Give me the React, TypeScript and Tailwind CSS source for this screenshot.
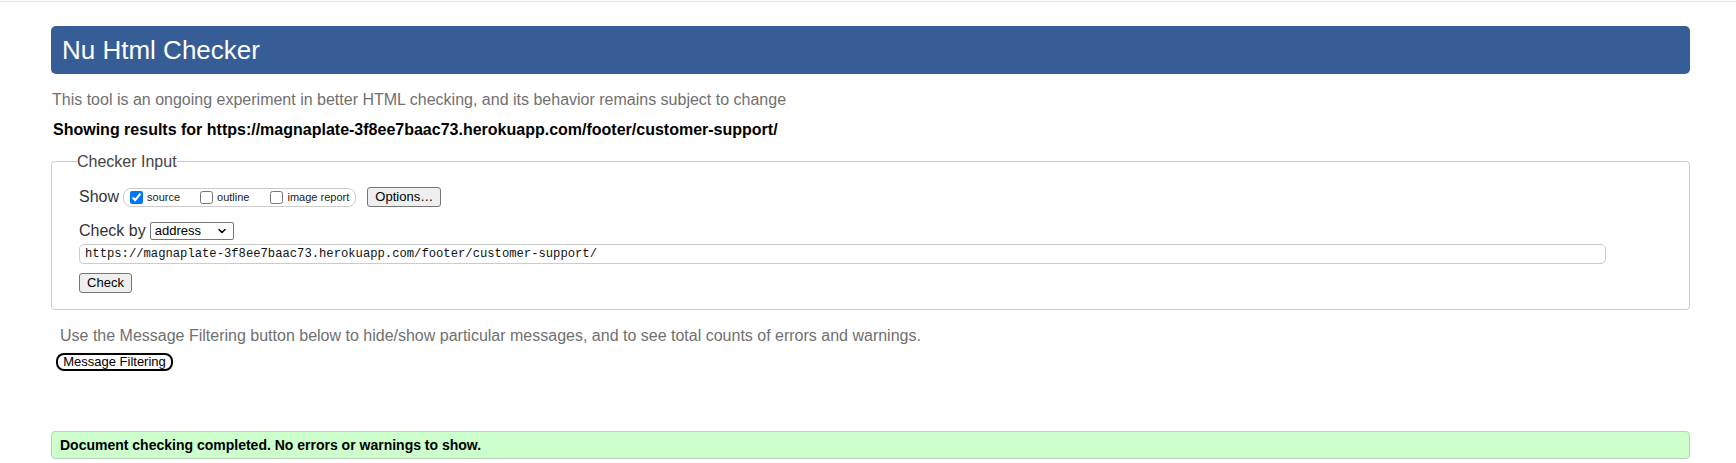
import { ChevronDown } from "lucide-react";

const url = "https://magnaplate-3f8ee7baac73.herokuapp.com/footer/customer-support/";

const ShowOption = ({ label, checked = false, gap = "ml-0" }: { label: string; checked?: boolean; gap?: string }) => (
  <label className={`flex items-center ${gap}`}>
    <input
      type="checkbox"
      defaultChecked={checked}
      className="m-0 h-[13px] w-[13px] accent-[#0075ff]"
    />
    <span className="ml-[4px] text-[11px] leading-[13px] text-[#222]">{label}</span>
  </label>
);

const GrayButton = ({ children, className = "" }: { children: React.ReactNode; className?: string }) => (
  <button
    type="button"
    className={`block h-[20px] rounded-[3px] border border-[#767676] bg-[#efefef] text-[13px] leading-[18px] text-black ${className}`}
  >
    {children}
  </button>
);

const App = () => {
  return (
    <div className="min-h-[463px] w-[1736px] bg-white font-['Liberation_Sans',Arial,sans-serif]">
      <div className="pt-px">
        <div className="h-px w-full bg-[#e4e4e4]" />
      </div>

      <div className="ml-[51px] w-[1639px]">
        {/* header */}
        <div className="mt-[24px] flex h-[48px] items-center rounded-[5px] bg-[#365d95] pl-[11px]">
          <h1 className="text-[26px] font-normal leading-[30px] text-white">Nu Html Checker</h1>
        </div>

        <p className="mt-[17px] pl-px text-[16px] leading-[18px] text-[#707070]">
          This tool is an ongoing experiment in better HTML checking, and its behavior remains subject to change
        </p>
        <p className="mt-[12px] pl-[2px] text-[16px] font-bold leading-[18px] text-black">
          Showing results for {url}
        </p>

        {/* checker input */}
        <fieldset className="mt-[14px] rounded-[4px] border border-[#cccccc] pb-[16px] pl-[27px]">
          <legend className="-ml-[2px] text-[16px] leading-[17px] text-[#444]">Checker Input</legend>

          <div className="mt-[17px] flex h-[20px] items-center">
            <span className="text-[16px] leading-[18px] text-[#333]">Show</span>
            <div className="ml-[4px] flex h-[19px] items-center rounded-[8px] border border-[#cccccc] pl-[6px] pr-[6px]">
              <ShowOption label="source" checked />
              <ShowOption label="outline" gap="ml-[20px]" />
              <ShowOption label="image report" gap="ml-[21px]" />
            </div>
            <GrayButton className="ml-[11px] w-[74px]">Options…</GrayButton>
          </div>

          <div className="mt-[15px] flex h-[18px] items-center">
            <span className="text-[16px] leading-[18px] text-[#333]">Check by</span>
            <div className="relative ml-[4px] flex">
              <select className="block h-[18px] w-[84px] appearance-none rounded-[2px] border border-[#767676] bg-white pl-[4px] text-[13px] leading-[16px] text-black">
                <option>address</option>
                <option>file upload</option>
                <option>text input</option>
              </select>
              <ChevronDown className="pointer-events-none absolute right-[6px] top-[3px] h-[12px] w-[12px] text-black" strokeWidth={3} />
            </div>
          </div>

          <input
            type="text"
            readOnly
            value={url}
            className="mt-[4px] block h-[20px] w-[1527px] rounded-[5px] border border-[#cccccc] px-[5px] font-['Liberation_Mono','Courier_New',monospace] text-[12.2px] leading-[18px] text-[#111]"
          />

          <div className="mt-[9px] flex">
            <GrayButton className="w-[53px]">Check</GrayButton>
          </div>
        </fieldset>

        <p className="mt-[17px] pl-[9px] text-[16px] leading-[18px] text-[#707070]">
          Use the Message Filtering button below to hide/show particular messages, and to see total counts of errors and warnings.
        </p>
        <div className="mt-[8px] flex pl-[5px]">
          <button
            type="button"
            className="block h-[18px] w-[117px] rounded-[8px] border-2 border-black bg-white text-[13px] leading-[14px] text-black"
          >
            Message Filtering
          </button>
        </div>

        {/* result */}
        <div className="mt-[60px] flex h-[28px] items-center rounded-[4px] border border-[#bdd0bd] bg-[#ccffcc] pl-[8px]">
          <p className="text-[14px] font-bold leading-[16px] text-black">
            Document checking completed. No errors or warnings to show.
          </p>
        </div>
      </div>
    </div>
  );
};

export default App;
